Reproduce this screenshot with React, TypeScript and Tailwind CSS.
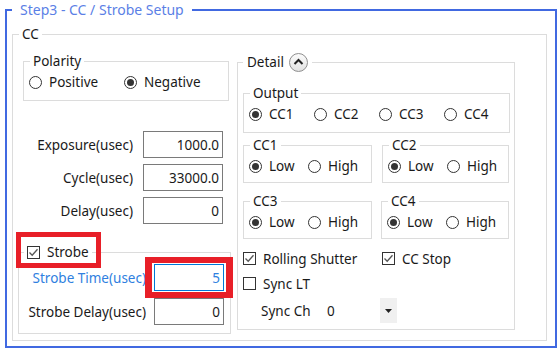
import React from 'react';

const BOX = 'border border-[#dcdcdc]';

function Radio({ checked, label, className }: { checked?: boolean; label: string; className?: string }) {
  return (
    <span className={`flex items-center gap-[7px] ${className ?? ''}`}>
      <span className="flex h-[13px] w-[13px] shrink-0 items-center justify-center rounded-full border border-[#333333] bg-white">
        {checked ? <span className="h-[7px] w-[7px] rounded-full bg-[#333333]" /> : null}
      </span>
      <span>{label}</span>
    </span>
  );
}

function Check({ checked, label, className }: { checked?: boolean; label: string; className?: string }) {
  return (
    <span className={`flex items-center gap-[7px] ${className ?? ''}`}>
      <span className="flex h-[13px] w-[13px] shrink-0 items-center justify-center border border-[#333333] bg-white">
        {checked ? (
          <svg width="11" height="11" viewBox="0 0 11 11">
            <path d="M1.5 5.5 L4.2 8.3 L9.5 2.2" fill="none" stroke="#555555" strokeWidth="1.3" />
          </svg>
        ) : null}
      </span>
      <span>{label}</span>
    </span>
  );
}

function NumField({ label, value }: { label: string; value: string }) {
  return (
    <div className="flex items-center">
      <span className="w-[120px] pr-[10px] text-right">{label}</span>
      <span className="flex h-[27px] w-[80px] items-center justify-end border border-[#7a7a7a] bg-white pr-[3px]">
        {value}
      </span>
    </div>
  );
}

function StrobeField({ label, value, focus }: { label: string; value: string; focus?: boolean }) {
  return (
    <div className="flex items-center">
      <span className={`w-[135px] pr-[8px] text-right ${focus ? 'text-[#2f7fe0]' : ''}`}>{label}</span>
      <span
        className={`flex h-[27px] w-[70px] items-center justify-end border bg-white pr-[3px] ${
          focus ? 'border-[#0078d7] text-[#2f7fe0]' : 'border-[#7a7a7a]'
        }`}
      >
        {value}
      </span>
    </div>
  );
}

function LevelBox({ title, width }: { title: string; width: string }) {
  return (
    <fieldset className={`${BOX} ${width} h-[47px]`}>
      <legend className="ml-[6px] h-[18px] px-[3px]">{title}</legend>
      <div className="flex h-[24px] items-center pl-[5px]">
        <Radio checked label="Low" className="w-[59px]" />
        <Radio label="High" />
      </div>
    </fieldset>
  );
}

export default function App() {
  return (
    <div className="relative h-[350px] w-[559px] bg-white font-['Noto_Sans',sans-serif] text-[13.5px] leading-[18px] text-[#1a1a1a]">
      <fieldset className="ml-[5px] h-[348px] w-[552px] border-2 border-[#4169e1]">
        <legend className="ml-[5px] h-[20px] px-[8px] text-[14px] leading-[20px] text-[#5b7fe6]">
          Step3 - CC / Strobe Setup
        </legend>
        <div className="pl-[5px] pt-[5px]">
          <fieldset className={`${BOX} h-[316px] w-[535px]`}>
            <legend className="ml-[6px] h-[18px] px-[3px]">CC</legend>
            <div className="flex gap-[6px] pl-[5px] pt-[9px]">
              {/* left column */}
              <div className="flex w-[213px] flex-col">
                <fieldset className={`${BOX} ml-[5px] h-[49px] w-[206px]`}>
                  <legend className="ml-[6px] h-[18px] px-[3px]">Polarity</legend>
                  <div className="flex h-[24px] items-center pl-[5px]">
                    <Radio label="Positive" className="w-[95px]" />
                    <Radio checked label="Negative" />
                  </div>
                </fieldset>
                <div className="mt-[30px] flex flex-col gap-[6px] pl-[5px]">
                  <NumField label="Exposure(usec)" value="1000.0" />
                  <NumField label="Cycle(usec)" value="33000.0" />
                  <NumField label="Delay(usec)" value="0" />
                </div>
                <fieldset className={`${BOX} mt-[19px] h-[91px] w-[213px]`}>
                  <legend className="ml-[5px] h-[18px] px-[3px]">
                    <Check checked label="Strobe" />
                  </legend>
                  <div className="mt-[3px] flex flex-col gap-[7px]">
                    <StrobeField label="Strobe Time(usec)" value="5" focus />
                    <StrobeField label="Strobe Delay(usec)" value="0" />
                  </div>
                </fieldset>
              </div>

              {/* detail */}
              <fieldset className={`${BOX} h-[278px] w-[278px]`}>
                <legend className="ml-[5px] flex h-[20px] items-center gap-[5px] px-[4px]">
                  <span>Detail</span>
                  <span className="flex h-[19px] w-[19px] items-center justify-center rounded-full border border-[#8f8f8f] bg-gradient-to-b from-[#fbfbfb] to-[#e2e2e2]">
                    <svg width="11" height="8" viewBox="0 0 11 8">
                      <path d="M1.5 6 L5.5 2 L9.5 6" fill="none" stroke="#222222" strokeWidth="2" />
                    </svg>
                  </span>
                </legend>
                <div className="flex flex-col pl-[5px] pt-[12px]">
                  <fieldset className={`${BOX} h-[49px] w-[267px]`}>
                    <legend className="ml-[6px] h-[18px] px-[3px]">Output</legend>
                    <div className="flex h-[24px] items-center pl-[5px]">
                      <Radio checked label="CC1" className="w-[65px]" />
                      <Radio label="CC2" className="w-[65px]" />
                      <Radio label="CC3" className="w-[65px]" />
                      <Radio label="CC4" />
                    </div>
                  </fieldset>
                  <div className="mt-[3px] flex gap-[10px]">
                    <LevelBox title="CC1" width="w-[129px]" />
                    <LevelBox title="CC2" width="w-[127px]" />
                  </div>
                  <div className="mt-[9px] flex gap-[9px]">
                    <LevelBox title="CC3" width="w-[129px]" />
                    <LevelBox title="CC4" width="w-[128px]" />
                  </div>
                  <div className="mt-[7px] flex h-[25px] items-center">
                    <Check checked label="Rolling Shutter" className="w-[139px]" />
                    <Check checked label="CC Stop" />
                  </div>
                  <div className="flex h-[25px] items-center">
                    <Check label="Sync LT" />
                  </div>
                  <div className="mt-[2px] flex h-[25px] items-center pl-[18px]">
                    <span className="w-[66px]">Sync Ch</span>
                    <span className="w-[53px]">0</span>
                    <span className="flex h-[25px] w-[17px] items-center justify-center bg-[#f0f0f0]">
                      <svg width="7" height="4" viewBox="0 0 7 4">
                        <path d="M0 0 H7 L3.5 4 Z" fill="#222222" />
                      </svg>
                    </span>
                  </div>
                </div>
              </fieldset>
            </div>
          </fieldset>
        </div>
      </fieldset>

      {/* red annotation frames */}
      <div className="pointer-events-none absolute left-[16px] top-[232px] h-[36px] w-[85px] border-[5px] border-[#e81f28]" />
      <div className="pointer-events-none absolute left-[145px] top-[257px] h-[41px] w-[88px] border-x-[7px] border-y-[6px] border-[#e81f28]" />
    </div>
  );
}
